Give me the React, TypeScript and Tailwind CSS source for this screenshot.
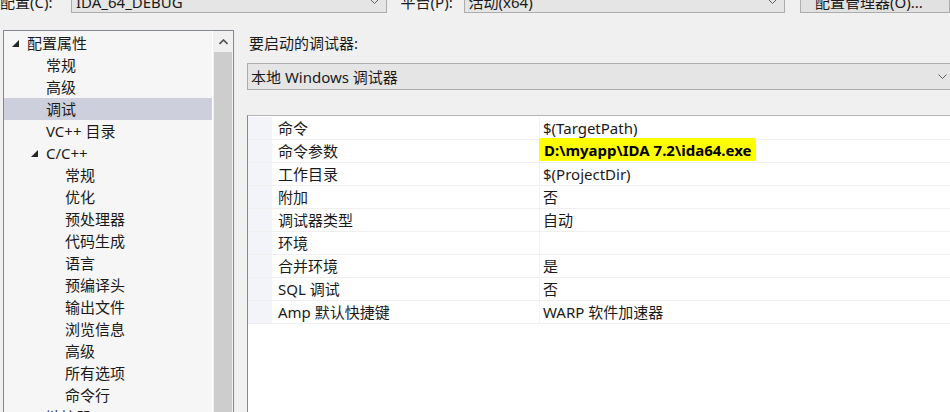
type TreeItem = { label: string; level: 0 | 1 | 2; expanded?: boolean; collapsed?: boolean; selected?: boolean };

const treeItems: TreeItem[] = [
  { label: "配置属性", level: 0, expanded: true },
  { label: "常规", level: 1 },
  { label: "高级", level: 1 },
  { label: "调试", level: 1, selected: true },
  { label: "VC++ 目录", level: 1 },
  { label: "C/C++", level: 1, expanded: true },
  { label: "常规", level: 2 },
  { label: "优化", level: 2 },
  { label: "预处理器", level: 2 },
  { label: "代码生成", level: 2 },
  { label: "语言", level: 2 },
  { label: "预编译头", level: 2 },
  { label: "输出文件", level: 2 },
  { label: "浏览信息", level: 2 },
  { label: "高级", level: 2 },
  { label: "所有选项", level: 2 },
  { label: "命令行", level: 2 },
  { label: "链接器", level: 1, collapsed: true },
];

const indent = { 0: "pl-[8px]", 1: "pl-[27px]", 2: "pl-[46px]" };

const props: { name: string; value: string; mark?: boolean }[] = [
  { name: "命令", value: "$(TargetPath)" },
  { name: "命令参数", value: "D:\\myapp\\IDA 7.2\\ida64.exe", mark: true },
  { name: "工作目录", value: "$(ProjectDir)" },
  { name: "附加", value: "否" },
  { name: "调试器类型", value: "自动" },
  { name: "环境", value: "" },
  { name: "合并环境", value: "是" },
  { name: "SQL 调试", value: "否" },
  { name: "Amp 默认快捷键", value: "WARP 软件加速器" },
];

function Chevron({ className = "" }: { className?: string }) {
  return (
    <svg width="9" height="6" viewBox="0 0 9 6" className={className}>
      <polyline points="0.5,0.5 4.5,4.5 8.5,0.5" fill="none" stroke="#606060" strokeWidth="1" />
    </svg>
  );
}

function Combo({ text, className }: { text: string; className: string }) {
  return (
    <div className={`flex h-full items-center justify-between border border-[#acacac] bg-[#e5e5e5] pl-[4px] pr-[7px] ${className}`}>
      <span>{text}</span>
      <Chevron />
    </div>
  );
}

export default function App() {
  return (
    <div className="relative h-[412px] w-[950px] overflow-hidden bg-[#f0f0f0] font-['Noto_Sans','Noto_Sans_CJK_SC',sans-serif] text-[15px] leading-[22px] text-[#1a1a1a]">
      <div className="-mt-[10px] flex h-[23px] items-center">
        <span className="w-[71px] shrink-0">配置(C):</span>
        <Combo text="IDA_64_DEBUG" className="w-[323px]" />
        <span className="ml-[14px] w-[63px] shrink-0">平台(P):</span>
        <Combo text="活动(x64)" className="w-[329px]" />
        <div className="ml-[15px] flex h-full w-[150px] shrink-0 items-center border border-[#adadad] bg-[#e1e1e1] pl-[14px]">
          配置管理器(O)...
        </div>
      </div>

      <div className="flex">
        {/* tree */}
        <aside className="ml-[3px] mt-[17px] flex h-[420px] w-[231px] shrink-0 border border-[#828790] bg-[#f6f6f6]">
          <div className="flex-1 border-r border-white pt-[1px]">
            {treeItems.map((item, i) => (
              <div
                key={i}
                className={`flex h-[22px] items-center ${indent[item.level]} ${item.selected ? "bg-[#cdd0dc]" : ""}`}
              >
                <span className="flex w-[15px] shrink-0 items-center">
                  {item.expanded ? (
                    <svg width="7" height="7" viewBox="0 0 7 7">
                      <path d="M7 0 L7 7 L0 7 Z" fill="#262626" />
                    </svg>
                  ) : item.collapsed ? (
                    <svg width="6" height="9" viewBox="0 0 6 9">
                      <path d="M0.5 0.5 L5.5 4.5 L0.5 8.5 Z" fill="none" stroke="#404040" />
                    </svg>
                  ) : null}
                </span>
                <span>{item.label}</span>
              </div>
            ))}
          </div>
          <div className="flex w-[20px] shrink-0 flex-col bg-[#f0f0f0]">
            <div className="flex h-[21px] items-center justify-center">
              <svg width="9" height="6" viewBox="0 0 9 6">
                <polyline points="0.5,5 4.5,1 8.5,5" fill="none" stroke="#505050" strokeWidth="1.6" />
              </svg>
            </div>
            <div className="mx-[1px] flex-1 bg-[#cdcdcd]" />
          </div>
        </aside>

        {/* right side */}
        <section className="ml-[13px] flex flex-1 flex-col">
          <div className="mt-[19px] h-[22px] pl-[2px]">要启动的调试器:</div>
          <div className="mt-[9px] flex h-[27px] items-center justify-between border border-r-0 border-[#acacac] bg-[#e5e5e5] pl-[3px] pr-[3px]">
            <span>本地 Windows 调试器</span>
            <Chevron />
          </div>

          <div className="mt-[25px] h-[300px] border-l border-t border-l-[#828790] border-t-[#b4b4b4] bg-white pt-[1px]">
            {props.map((p) => (
              <div key={p.name} className="flex h-[23px] border-b border-[#efefef]">
                <div className="w-[24px] shrink-0 bg-[#f2f4f9]" />
                <div className="flex w-[267px] shrink-0 items-center pl-[6px]">{p.name}</div>
                <div className="flex flex-1 items-center border-l border-[#f3f3f3] pl-[3px]">
                  {p.mark ? (
                    <span className="-ml-[4px] -mt-[3px] inline-block rounded-[2px] bg-[#ffff00] px-[5px] pt-[1px] text-[15px] font-bold leading-[22px] text-black">
                      {p.value}
                    </span>
                  ) : (
                    p.value
                  )}
                </div>
              </div>
            ))}
          </div>
        </section>
      </div>
    </div>
  );
}
